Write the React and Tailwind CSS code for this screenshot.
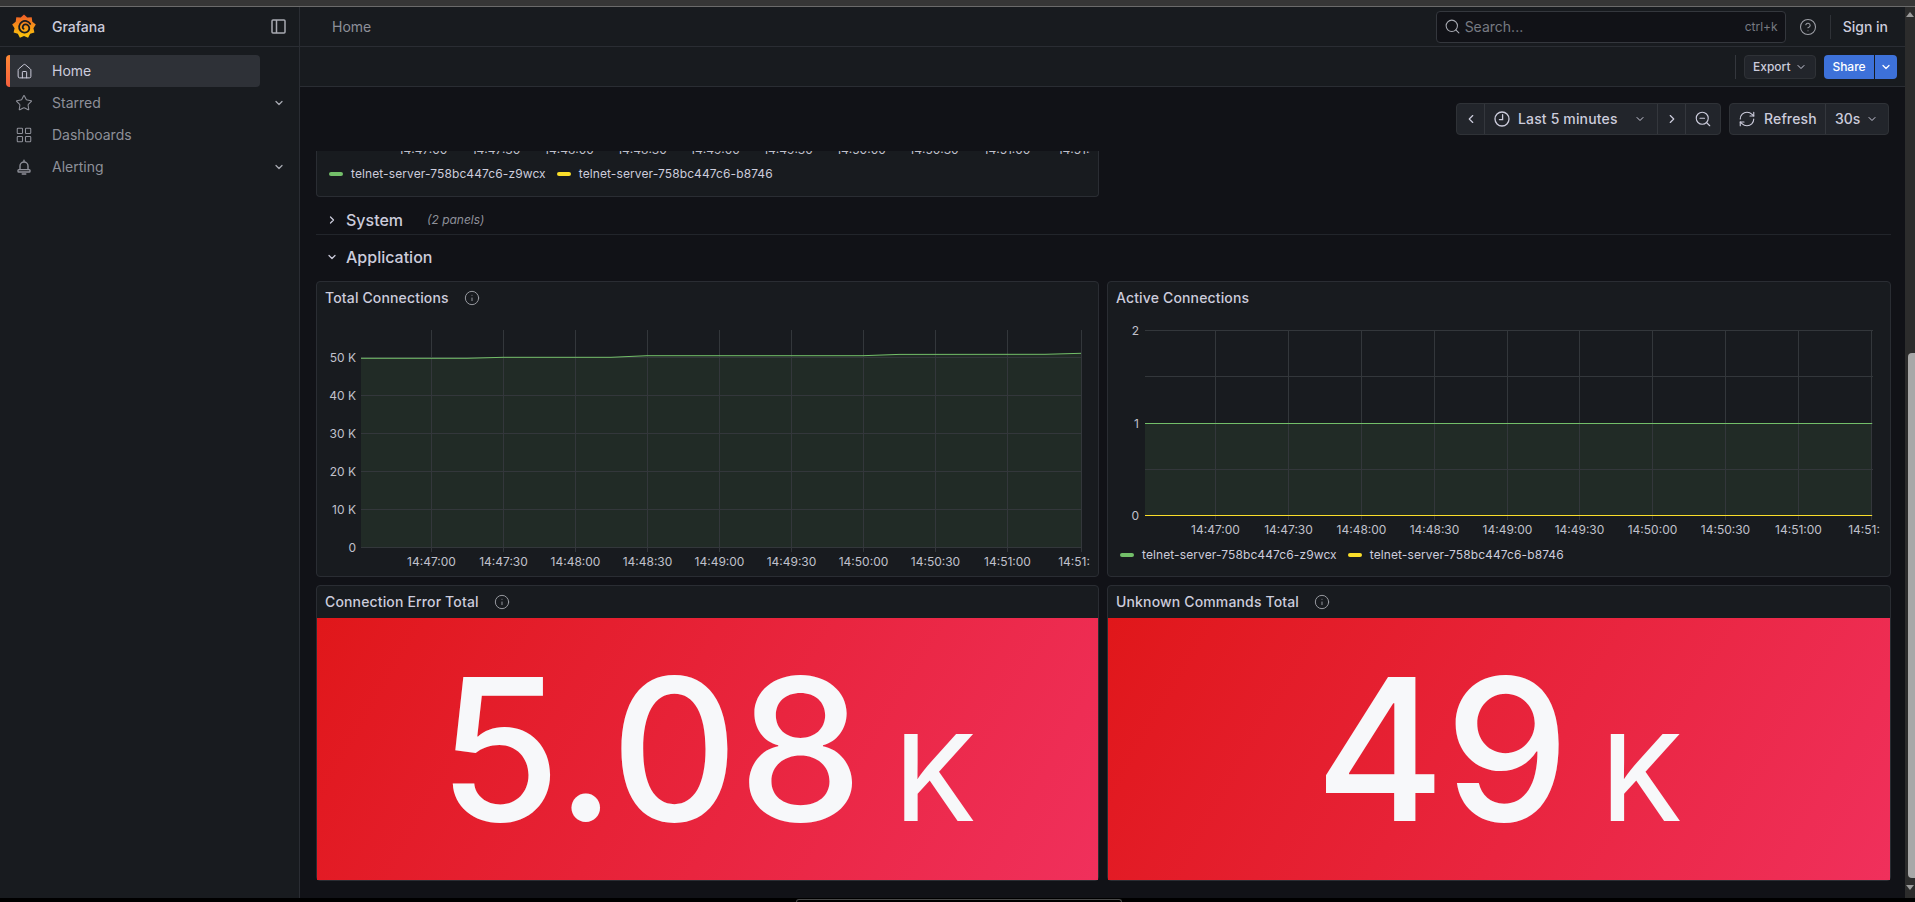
import { ChevronDown, ChevronLeft, ChevronRight, CircleHelp, House, Info, LayoutGrid, RefreshCw, Search, Star, ZoomOut } from "lucide-react";

const GREEN = "#73bf69";
const YELLOW = "#fade2a";
const GRID = "#33373b";
const TICK = "#c0c1cc";

const LEFT_TICKS = [
  [431.5, "14:47:00"],
  [503.5, "14:47:30"],
  [575.5, "14:48:00"],
  [647.5, "14:48:30"],
  [719.5, "14:49:00"],
  [791.5, "14:49:30"],
  [863.5, "14:50:00"],
  [935.5, "14:50:30"],
  [1007.5, "14:51:00"],
  [1081.5, "14:51:30"],
];

const RIGHT_TICKS = [
  [1215.5, "14:47:00"],
  [1288.5, "14:47:30"],
  [1361.5, "14:48:00"],
  [1434.5, "14:48:30"],
  [1507.5, "14:49:00"],
  [1579.5, "14:49:30"],
  [1652.5, "14:50:00"],
  [1725.5, "14:50:30"],
  [1798.5, "14:51:00"],
  [1871.5, "14:51:30"],
];

// panel scrolled under the toolbar, only the bottom of its labels shows
const HIDDEN_TICKS = LEFT_TICKS.map(([, label], i) => [i === 9 ? 1081 : 423 + i * 73, label]);

// the spiky outline of the logo
const sunPoints = () => {
  const pts = [];
  for (let i = 0; i < 18; i++) {
    const a = (i / 18) * Math.PI * 2 - Math.PI / 2;
    const r = i % 2 === 0 ? 12 : 9.6;
    pts.push(`${(12 + Math.cos(a) * r).toFixed(2)},${(12 + Math.sin(a) * r).toFixed(2)}`);
  }
  return pts.join(" ");
};

const GrafanaLogo = () => (
  <svg width="24" height="25" viewBox="0 0 24 24" className="shrink-0">
    <defs>
      <linearGradient id="sun" x1="0" y1="0" x2="0" y2="1">
        <stop offset="0" stopColor="#f05a28" />
        <stop offset="1" stopColor="#fbca0a" />
      </linearGradient>
    </defs>
    <polygon points={sunPoints()} fill="url(#sun)" />
    <path
      d="M18.2 9.4C16.6 6.4 12.6 5.6 9.8 7.4 6.8 9.4 6.2 13.6 8.4 16.2c2 2.4 5.8 2.6 7.8.4 1.6-1.8 1.4-4.6-.4-6-1.6-1.2-3.8-.8-4.8.8-.6 1-.4 2.2.6 2.8"
      fill="none"
      stroke="#181b1f"
      strokeWidth="1.8"
      strokeLinecap="round"
    />
  </svg>
);

const ClockIcon = () => (
  <svg width="16" height="16" viewBox="0 0 16 16" fill="none" stroke="currentColor" strokeWidth="1.3" strokeLinecap="round">
    <circle cx="8" cy="8" r="7" />
    <path d="M8.6 3.6v5H5.4" />
  </svg>
);

const BellIcon = ({ size, className }) => (
  <svg width={size} height={size} viewBox="0 0 18 18" fill="none" stroke="currentColor" strokeWidth="1.4" strokeLinecap="round" strokeLinejoin="round" className={className}>
    <path d="M9 2.2v1.2M5 11.5V8a4 4 0 0 1 8 0v3.5" />
    <path d="M3.8 11.6h10.4c.5 0 .8.3.8.8v.8c0 .5-.3.8-.8.8H3.800c-.5 0-.8-.3-.8-.8v-.8c0-.5.3-.8.8-.8z" />
    <path d="M7.2 16h3.600" />
  </svg>
);

const NavItem = ({ icon: Icon, size = 18, label, active, expandable }) => (
  <div
    className={`relative flex h-8 items-center ${active ? "ml-[6px] w-[254px] rounded-sm bg-[#2e3137] text-[#ccccdc]" : "text-[#8e9099]"}`}
  >
    {active && <div className="absolute left-0 top-0 h-8 w-1 rounded-l-sm bg-gradient-to-b from-[#ff8833] to-[#f55f3e]" />}
    <div className={`flex w-[18px] justify-center ${active ? "ml-[9px]" : "ml-[15px]"}`}>
      <Icon size={size} strokeWidth={1.4} className={active ? "text-[#ccccdc]" : "text-[#8e9099]"} />
    </div>
    <span className="ml-[19px] text-sm">{label}</span>
    {expandable && <ChevronDown size={12} strokeWidth={2.5} className="ml-auto mr-[14px] text-[#a8aab2]" />}
  </div>
);

const Sidebar = () => (
  <aside className="flex w-[300px] shrink-0 flex-col border-r border-[#2a2d33] bg-[#181b1f]">
    <div className="flex h-10 items-center border-b border-[#2a2d33]">
      <div className="ml-3">
        <GrafanaLogo />
      </div>
      <span className="ml-4 text-sm font-medium text-[#ccccdc]">Grafana</span>
      <svg width="15" height="15" viewBox="0 0 15 15" className="ml-auto mr-[13px] text-[#a8aab2]" fill="none" stroke="currentColor" strokeWidth="1.5">
        <rect x="1" y="1" width="13" height="13" rx="1" />
        <path d="M5.5 1v13" />
      </svg>
    </div>
    <nav className="mt-2 flex flex-col">
      <NavItem icon={House} size={17} label="Home" active />
      <NavItem icon={Star} label="Starred" expandable />
      <NavItem icon={LayoutGrid} label="Dashboards" />
      <NavItem icon={BellIcon} label="Alerting" expandable />
    </nav>
  </aside>
);

const Header = () => (
  <div className="shrink-0 bg-[#181b1f]">
    <div className="flex h-10 items-center border-b border-[#2a2d33] pl-8 pr-[17px]">
      <span className="text-sm text-[#8e9099]">Home</span>
      <div className="ml-auto flex h-8 w-[350px] items-center rounded-sm border border-[#34373d] bg-[#111217] pl-[7px] pr-[7px]">
        <Search size={17} strokeWidth={1.5} className="text-[#a8aab2]" />
        <span className="ml-1 text-sm text-[#777a82]">Search...</span>
        <span className="ml-auto text-xs text-[#777a82]">ctrl+k</span>
      </div>
      <CircleHelp size={18} strokeWidth={1.4} className="ml-[13px] text-[#9fa1a8]" />
      <div className="ml-[13px] h-6 w-px bg-[#2f3237]" />
      <span className="ml-3 text-sm font-medium text-[#ccccdc]">Sign in</span>
    </div>
    <div className="flex h-10 items-center justify-end border-b border-[#2a2d33] pr-2">
      <div className="h-6 w-px bg-[#34373d]" />
      <button className="ml-2 flex h-6 w-[72px] items-center rounded-sm border border-[#2f3237] bg-[#22252b] pl-2 text-xs font-medium text-[#ccccdc]">
        Export
        <ChevronDown size={12} strokeWidth={2} className="ml-1" />
      </button>
      <button className="ml-2 flex h-6 w-[50px] items-center justify-center rounded-l-sm bg-[#3d71d9] text-xs font-medium text-white">Share</button>
      <button className="ml-px flex h-6 w-[22px] items-center justify-center rounded-r-sm bg-[#3d71d9] text-white">
        <ChevronDown size={12} strokeWidth={2.5} />
      </button>
    </div>
  </div>
);

const Controls = () => (
  <div className="flex h-16 shrink-0 items-center justify-end gap-2 pr-[2px] text-sm font-medium text-[#ccccdc]">
    <div className="flex h-8 items-stretch rounded-sm border border-[#2f3237] bg-[#22252b]">
      <div className="flex w-[27px] items-center justify-center">
        <ChevronLeft size={14} strokeWidth={2} />
      </div>
      <div className="flex w-[173px] items-center border-l border-[#34373d] pl-[9px]">
        <ClockIcon />
        <span className="ml-2 tracking-[0.15px]">Last 5 minutes</span>
        <ChevronDown size={12} strokeWidth={2} className="ml-4" />
      </div>
      <div className="flex w-[28px] items-center justify-center border-l border-[#34373d]">
        <ChevronRight size={14} strokeWidth={2} />
      </div>
      <div className="flex w-[35px] items-center justify-center border-l border-[#34373d]">
        <ZoomOut size={18} strokeWidth={1.5} />
      </div>
    </div>
    <div className="flex h-8 items-stretch rounded-sm border border-[#2f3237] bg-[#22252b]">
      <div className="flex w-[95px] items-center pl-[8px]">
        <RefreshCw size={18} strokeWidth={1.5} />
        <span className="ml-[8px] tracking-[0.15px]">Refresh</span>
      </div>
      <div className="flex w-[63px] items-center border-l border-[#34373d] pl-[9px]">
        30s
        <ChevronDown size={12} strokeWidth={2} className="ml-[6px]" />
      </div>
    </div>
  </div>
);

const Legend = ({ className }) => (
  <div className={`flex items-center text-xs tracking-[0.1px] text-[#ccccdc] ${className}`}>
    <span className="h-1 w-[14px] rounded-sm bg-[#73bf69]" />
    <span className="ml-2">telnet-server-758bc447c6-z9wcx</span>
    <span className="ml-[11px] h-1 w-[14px] rounded-sm bg-[#fade2a]" />
    <span className="ml-2">telnet-server-758bc447c6-b8746</span>
  </div>
);

const TimeLabels = ({ ticks, y }) =>
  ticks.map(([x, label]) => (
    <text key={label} x={x} y={y} textAnchor="middle" fontSize="12" fill={TICK}>
      {label}
    </text>
  ));

const TotalConnectionsChart = () => {
  const ys = [[357.5, "50 K"], [395.5, "40 K"], [433.5, "30 K"], [471.5, "20 K"], [509.5, "10 K"], [547.5, "0"]];
  const line = "361,358.3 467,358.3 503,357.3 611,357.3 647,355.7 863,355.7 899,354.4 1045,354.3 1081,353.3";
  return (
    <svg width="773" height="261" viewBox="317 314 773 261" className="block">
      <polygon points={`${line} 1081,547.5 361,547.5`} fill={GREEN} fillOpacity="0.1" />
      {ys.map(([y, label]) => (
        <g key={label}>
          <line x1="361" x2="1082" y1={y} y2={y} stroke={GRID} />
          <text x="356" y={y + 4} textAnchor="end" fontSize="12" fill={TICK}>
            {label}
          </text>
        </g>
      ))}
      {LEFT_TICKS.map(([x]) => (
        <line key={x} x1={x} x2={x} y1="330" y2="552" stroke={GRID} />
      ))}
      <polyline points={line} fill="none" stroke={GREEN} strokeWidth="1" />
      <TimeLabels ticks={LEFT_TICKS} y={566} />
    </svg>
  );
};

const ActiveConnectionsChart = () => {
  const ys = [[330.5, "2"], [376.5, ""], [423.5, "1"], [469.5, ""], [515.5, "0"]];
  return (
    <svg width="772" height="230" viewBox="1108 314 772 230" className="block">
      <rect x="1145" y="423.5" width="727" height="92" fill={GREEN} fillOpacity="0.1" />
      {ys.map(([y, label]) => (
        <g key={y}>
          <line x1="1145" x2="1873" y1={y} y2={y} stroke={GRID} />
          {label && (
            <text x="1139" y={y + 4} textAnchor="end" fontSize="12" fill={TICK}>
              {label}
            </text>
          )}
        </g>
      ))}
      {RIGHT_TICKS.map(([x]) => (
        <line key={x} x1={x} x2={x} y1="330" y2="520" stroke={GRID} />
      ))}
      <line x1="1145" x2="1872" y1="423.5" y2="423.5" stroke={GREEN} />
      <line x1="1145" x2="1872" y1="515.5" y2="515.5" stroke={YELLOW} />
      <TimeLabels ticks={RIGHT_TICKS} y={534} />
    </svg>
  );
};

const PanelTitle = ({ title, info }) => (
  <div className="flex h-8 shrink-0 items-center pl-2 text-sm font-medium tracking-[0.15px] text-[#ccccdc]">
    {title}
    {info && <Info size={16} strokeWidth={1.4} className="ml-[15px] text-[#9fa1a8]" />}
  </div>
);

const StatPanel = ({ title, value }) => (
  <div className="flex h-[296px] flex-col rounded-sm border border-[#2a2d33] bg-[#181b1f]">
    <PanelTitle title={title} info />
    <div className="flex flex-1 items-center justify-center bg-[linear-gradient(120deg,#e0171a,#f0305c)] text-[#f7f8fa]">
      <p className="whitespace-pre text-center text-[198px] font-medium leading-none">
        {value}
        <span className="text-[119px]"> K</span>
      </p>
    </div>
  </div>
);

const Dashboard = () => (
  <main className="flex min-h-0 flex-1 flex-col overflow-hidden bg-[#111217] pl-4 pr-[14px]">
    <Controls />
    <div className="flex h-[46px] w-[783px] shrink-0 flex-col rounded-b-sm border-x border-b border-[#2a2d33] bg-[#181b1f]">
      <svg width="773" height="6" viewBox="317 151 773 6" className="block shrink-0">
        <TimeLabels ticks={HIDDEN_TICKS} y={154} />
      </svg>
      <Legend className="ml-3 mt-[9px]" />
    </div>
    <div className="flex h-[38px] shrink-0 items-center border-b border-[#22252b] pl-[10px] pt-2 text-[#ccccdc]">
      <ChevronRight size={12} strokeWidth={2.5} />
      <span className="ml-[8px] text-base font-medium">System</span>
      <span className="ml-6 text-xs italic text-[#8e9099]">(2 panels)</span>
    </div>
    <div className="flex h-[46px] shrink-0 items-center pb-[3px] pl-[10px] text-[#ccccdc]">
      <ChevronDown size={12} strokeWidth={2.5} />
      <span className="ml-[8px] text-base font-medium">Application</span>
    </div>
    <div className="grid grid-cols-[783px_784px] gap-2">
      <div className="h-[296px] rounded-sm border border-[#2a2d33] bg-[#181b1f]">
        <PanelTitle title="Total Connections" info />
        <TotalConnectionsChart />
      </div>
      <div className="h-[296px] rounded-sm border border-[#2a2d33] bg-[#181b1f]">
        <PanelTitle title="Active Connections" />
        <ActiveConnectionsChart />
        <Legend className="ml-3 mt-[3px]" />
      </div>
      <StatPanel title="Connection Error Total" value="5.08" />
      <StatPanel title="Unknown Commands Total" value="49" />
    </div>
  </main>
);

const Scrollbar = () => (
  <div className="relative w-[10px] shrink-0 bg-[#2c2c2c]">
    <div className="absolute right-[1px] top-[5px] h-0 w-0 border-x-[4px] border-b-[5px] border-x-transparent border-b-[#9a9a9a]" />
    <div className="absolute right-0 top-[346px] h-[525px] w-[7px] rounded-l-sm bg-[#a8a8a8]" />
    <div className="absolute bottom-[8px] right-[1px] h-0 w-0 border-x-[4px] border-t-[5px] border-x-transparent border-t-[#9a9a9a]" />
  </div>
);

export default function App() {
  return (
    <div className="relative flex h-[902px] w-[1915px] flex-col overflow-hidden bg-black [font-family:Inter,sans-serif]">
      <div className="h-[7px] shrink-0 border-b border-[#6b6b6b] bg-[#363636]" />
      <div className="flex min-h-0 flex-1">
        <Sidebar />
        <div className="flex min-w-0 flex-1 flex-col">
          <Header />
          <Dashboard />
        </div>
        <Scrollbar />
      </div>
      <div className="relative h-1 shrink-0 bg-black">
        <div className="absolute left-[796px] top-px h-[3px] w-[326px] rounded-t-md border-x border-t border-[#4a4a4a]" />
      </div>
    </div>
  );
}
